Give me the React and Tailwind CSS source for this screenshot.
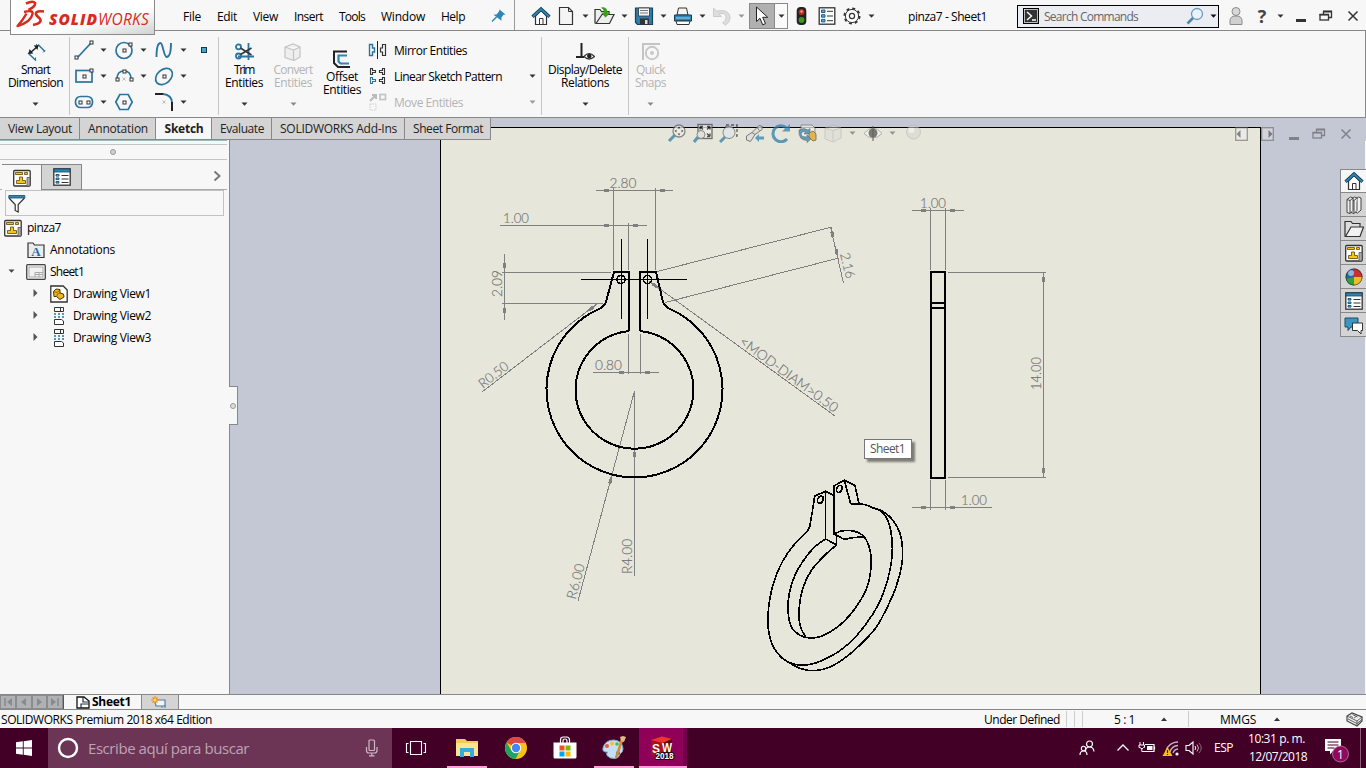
import React, { useLayoutEffect, useRef } from "react";

/* Text run whose tracking is tuned so that it fills a known width. */
function T({ w, c = "", children }) {
  const ref = useRef(null);
  useLayoutEffect(() => {
    const el = ref.current;
    const n = el.textContent.length;
    el.style.letterSpacing = "0px";
    const natural = el.getBoundingClientRect().width;
    el.style.letterSpacing = `${(w - natural) / n}px`;
  }, [w]);
  return (
    <span className={"flex shrink-0 whitespace-nowrap " + c} style={{ width: w }}>
      <span ref={ref} className="inline-block">{children}</span>
    </span>
  );
}

function I({ w = 20, h = 20, c = "", children }) {
  return (
    <svg width={w} height={h} viewBox={`0 0 ${w} ${h}`} fill="none" className={"shrink-0 " + c}>
      {children}
    </svg>
  );
}

const Down = ({ c = "", f = "#333" }) => (
  <I w={7} h={4} c={c}><path d="M.5 .5h6L3.5 3.8z" fill={f} /></I>
);

const B = "#2a759f";
const K = "#333";

/* ---------- shared icons ---------- */
const Home = ({ c }) => (
  <I c={c}>
    <path d="M4.500 10v8.500h11V10L10 4.500z" fill="#fff" stroke={K} strokeWidth="1.200" />
    <path d="M8.500 18.500v-6h3.500v6" stroke={K} />
    <path d="M1.500 10.800L10 3l8.500 7.800" stroke="#123c55" strokeWidth="3.200" />
    <path d="M2 10.500L10 3.200l8 7.300" stroke="#2f86b4" strokeWidth="1.800" />
  </I>
);
const DrawingIcon = ({ c }) => (
  <I w={18} h={18} c={c}>
    <rect x=".7" y="1.500" width="16.500" height="15.500" rx="1" fill="#fff" stroke={K} strokeWidth="1.300" />
    <path d="M2.500 3.500h7v2h-7zM11.500 3.500h3v2h-3zM6.500 8h3v3.500h3v3h-9v-3h3z" fill="#f5c518" stroke="#5d4700" strokeWidth=".8" />
    <path d="M14 8.500h3v8.500h-3z" fill="#aaa" stroke="#555" strokeWidth=".8" />
  </I>
);
const ListIcon = ({ c }) => (
  <I w={18} h={18} c={c}>
    <rect x=".8" y=".8" width="16.400" height="16.400" fill="#fff" stroke={K} strokeWidth="1.300" />
    <path d="M1 1h16v3H1z" fill="#2f86b4" stroke="#16445f" strokeWidth=".8" />
    <path d="M3 6.500h3v1.600H3zM3 10h3v1.600H3zM3 13.500h3v1.600H3z" fill="#5ab0dc" stroke="#155074" strokeWidth=".9" />
    <path d="M8.500 7.500h7M8.500 11h7M8.500 14.500h7" stroke={K} />
  </I>
);
const OptionsList = ({ c }) => (
  <I w={18} h={18} c={c}>
    <rect x="1.200" y=".8" width="15.600" height="16.400" fill="#fff" stroke={K} strokeWidth="1.300" />
    <path d="M3.500 3h3.500v2.500H3.500zM3.500 7.700h3.500v2.500H3.500zM3.500 12.400h3.500v2.500H3.500z" fill="#5ab0dc" stroke="#155074" strokeWidth=".9" />
    <path d="M9 4.300h6M9 9h6M9 13.700h6" stroke={K} />
  </I>
);
const Restore = ({ c, s = "#333" }) => (
  <I w={14} h={14} c={c}>
    <path d="M4.500 5V2.500h8v6H10" stroke={s} strokeWidth="1.300" />
    <path d="M4 2.500h9" stroke={s} strokeWidth="1.800" />
    <rect x="1" y="5.500" width="8.500" height="5.500" stroke={s} strokeWidth="1.300" />
    <path d="M.5 5.700h9.500" stroke={s} strokeWidth="1.600" />
  </I>
);
const Close = ({ c, s = "#333" }) => (
  <I w={12} h={12} c={c}><path d="M1.500 1.500l9 9M10.500 1.500l-9 9" stroke={s} strokeWidth="1.500" /></I>
);
const Min = ({ c, s = "#333" }) => (
  <I w={12} h={12} c={c}><path d="M1 8.500h10" stroke={s} strokeWidth="3" /></I>
);

/* ---------- title bar ---------- */
function TitleBar() {
  return (
    <header className="relative flex h-[31px] shrink-0 items-center border-b border-[#888] bg-[#f7f7f7] pt-[2px] pl-[183px]">
      <div className="absolute top-0 left-[10px] z-20 h-[35px] w-[145px] border-x border-b border-[#8a8a8a] bg-linear-to-br from-white from-60% to-[#d2d2d2]">
        <div className="flex items-start pl-[5px]">
          <I w={30} h={30}>
            <g stroke="#da2a1e" strokeLinejoin="round">
              <path d="M10 3.500Q17 .5 19 3Q20 6 12.500 10" strokeWidth="2.600" />
              <path d="M8 12Q17.500 9.500 16.500 14Q15 22 1.500 26Q7 20 10.500 13.500" strokeWidth="2.400" />
              <path d="M28 11.500Q20 10.500 19.800 13.500Q20 15.500 23.800 18.500Q27 23 17 25" strokeWidth="2.600" />
            </g>
          </I>
          <div className="mt-[9px] ml-[3px] flex text-[15.500px] leading-[20px] text-[#da2a1e] italic">
            <T w={49} c="font-extrabold">SOLID</T><T w={51}>WORKS</T>
          </div>
        </div>
      </div>

      <nav className="flex gap-4 pt-px">
        <T w={18}>File</T><T w={20}>Edit</T><T w={25}>View</T><T w={29}>Insert</T>
        <T w={26}>Tools</T><T w={44}>Window</T><T w={24}>Help</T>
      </nav>
      <I w={16} h={16} c="ml-[26px]">
        <path d="M8.500 1.500l6 5-2 .3-2.200 3 .2 3-8-6 3-.3 2.500-3z" fill="#2f86b4" />
        <path d="M1 13.500l4.500-4.500" stroke="#2f86b4" strokeWidth="1.500" />
      </I>
      <i className="-mt-[2px] ml-[7px] h-[30px] w-px shrink-0 self-start bg-[#999]" />
      <Home c="ml-[16px]" />
      <I w={18} c="ml-[6px]"><path d="M2.500 1.500h9l4 4v13h-13z" fill="#f4f4f4" stroke={K} strokeWidth="1.200" /><path d="M11.500 1.500v4h4" stroke={K} /></I>
      <Down c="ml-[7px]" />
      <I w={24} c="ml-[4px]">
        <path d="M2 17.500V3.500h5l1.500 2H16v3" fill="#eee" stroke={K} strokeWidth="1.200" />
        <path d="M3 17.500L9 8.500h12l-4.500 9z" fill="#eee" stroke={K} strokeWidth="1.200" />
        <path d="M8 1.500q6-1 6.500 5h3l-5 5-4.500-5h3q0-3-3-5z" fill="#3c9a1c" />
      </I>
      <Down c="ml-[4px]" />
      <I c="ml-[6px]">
        <path d="M1.500 2h17v16.500h-15l-2-2z" fill="#2f7da8" stroke="#17435c" strokeWidth="1.200" />
        <path d="M4.500 2h11v8h-11z" fill="#f3f3f3" stroke="#333" strokeWidth=".8" /><path d="M6 4.500h8M6 7h8" stroke="#777" />
        <path d="M6 12.500h9v6H6z" fill="#333" /><path d="M11 14h2.500v4H11z" fill="#ddd" />
      </I>
      <Down c="ml-[6px]" />
      <I c="ml-[6px]">
        <path d="M5.500 2h8l1.500 7h-11z" fill="#f4f4f4" stroke={K} />
        <path d="M1.500 9h17v6h-17z" fill="#2f86b4" stroke="#133d55" /><path d="M3 15h14l-1 3.500H4z" fill="#fff" stroke={K} />
        <path d="M3 12h14" stroke="#9ad0ec" />
      </I>
      <Down c="ml-[6px]" />
      <I c="ml-[6px]"><path d="M1.500 2v8.500h8L7 8q7-2 7 3.500 0 3-3.500 5.500l3 2q5-3 4.500-8.500Q16.500 3 4.500 5z" fill="#ddd" stroke="#c4c4c4" strokeWidth=".8" /></I>
      <Down c="ml-[6px]" f="#999" />
      <div className="ml-[4px] flex h-[26px] w-[39px] shrink-0 items-center border border-[#888] bg-[#fafafa]">
        <div className="flex h-full w-[25px] items-center justify-center border-r border-[#888] bg-[#b0b0b0]">
          <I w={16} h={22}><path d="M2.500 2v14.500l3.500-3.200 2.700 6.500 2.800-1.200-2.800-6.300h5z" fill="#fff" stroke="#222" /></I>
        </div>
        <Down c="ml-[3px]" />
      </div>
      <I w={11} c="mr-[-1px] ml-[8px]"><rect x=".7" y="1" width="9.600" height="18" rx="4" fill="#222" /><circle cx="5.500" cy="6" r="2.900" fill="#c22a1a" /><circle cx="5.500" cy="5.500" r="1.200" fill="#f59a85" /><circle cx="5.500" cy="14" r="2.900" fill="#3a9a20" /></I>
      <OptionsList c="ml-[12px]" />
      <I w={18} h={18} c="ml-[7px]">
        <circle cx="9" cy="9" r="7.600" stroke={K} strokeWidth="1.800" strokeDasharray="3 2.970" />
        <circle cx="9" cy="9" r="6.600" fill="#fff" stroke={K} strokeWidth="1" />
        <circle cx="9" cy="9" r="2.600" stroke={K} strokeWidth="1.200" />
      </I>
      <Down c="ml-[7px]" />
      <T w={79} c="ml-[33px] pt-px">pinza7 - Sheet1</T>
      <div className="ml-[30px] flex h-[23px] w-[202px] shrink-0 items-center border border-black bg-[#ecedf2] pl-[5px]">
        <I w={16} h={16}><rect x=".5" y=".5" width="15" height="15" fill="#333" stroke="#000" /><rect x="1.500" y="1.500" width="13" height="13" stroke="#ddd" strokeWidth=".8" /><path d="M4 4l4.500 4L4 12M9 12h4" stroke="#fff" strokeWidth="1.400" /></I>
        <T w={94} c="ml-[5px] pt-px text-[#666]">Search Commands</T>
        <I w={18} h={18} c="ml-[48px]"><circle cx="11" cy="7" r="5.500" fill="#e8f3fa" stroke="#6c9dbd" strokeWidth="1.300" /><path d="M7 11l-5.500 5.500" stroke="#4d86ae" strokeWidth="2.600" /></I>
        <Down c="ml-[6px]" f="#111" />
      </div>
      <I w={14} c="ml-[10px]"><circle cx="7" cy="5.500" r="4" fill="#d8d8d8" stroke="#8a8a8a" /><path d="M1 18.500v-4q0-4.500 6-4.500t6 4.500v4z" fill="#d0d0d0" stroke="#8a8a8a" /></I>
      <div className="ml-[13px] flex w-3 justify-center text-[18px] font-bold text-[#444]">?</div>
      <Down c="ml-[9px]" />
      <Min c="mt-1 ml-[11px]" />
      <Restore c="ml-[12px]" />
      <Close c="ml-[14px]" />
    </header>
  );
}

/* ---------- ribbon ---------- */
const Sq = ({ x, y }) => <rect x={x - 1.5} y={y - 1.5} width="3" height="3" fill="#fff" stroke={K} />;
const Split = () => <i className="mt-[6px] h-[78px] w-px shrink-0 bg-[#c6c6c6]" />;

function Big({ c, icon, lines, ws, dim, arrow = true, top = "pt-[12px]" }) {
  return (
    <div className={"flex h-full shrink-0 flex-col items-center leading-[13px] " + top + " " + (dim ? "text-[#b4b4b4] " : "") + c}>
      {icon}
      <T w={ws[0]} c="mt-[2px]">{lines[0]}</T>
      <T w={ws[1]}>{lines[1]}</T>
      {arrow && <Down c="mt-[13px]" f={dim ? "#888" : "#333"} />}
    </div>
  );
}

const Cell = ({ children, arrow = true }) => (
  <div className="flex h-[26px] w-[40px] items-center">
    {children}
    {arrow && <Down c="ml-[6px]" />}
  </div>
);

function Ribbon() {
  return (
    <section className="flex h-[87px] shrink-0 border-r border-b border-[#888] bg-[#f7f7f7]">
      <Big c="w-[69px] pl-[2px]" lines={["Smart", "Dimension"]} ws={[29, 55]}
        icon={<I h={18}><path d="M2 10l8 7.500M12 1.500l7 7" stroke={B} strokeWidth="1.500" /><path d="M2 10.500l2-1.500M9.500 17.500v-3M11 1l-1 1M17 9.500l2-2" stroke={B} /><path d="M4 10L12 3" stroke="#222" strokeWidth="1.600" /><path d="M2.500 11l1-5 3.800 4.500zM12.500 2l-1 5L7.800 2.500z" fill="#222" /></I>} />
      <Split />
      <div className="grid h-[78px] w-[148px] grid-cols-[40px_40px_40px_28px] pt-[6px] pl-[4px]">
        <Cell><I><path d="M3 18L17 3" stroke={B} strokeWidth="1.800" /><Sq x={2.500} y={17.500} /><Sq x={17.500} y={2.500} /></I></Cell>
        <Cell><I><circle cx="10" cy="10.500" r="8" stroke={B} strokeWidth="1.700" /><Sq x={10.500} y={10.500} /><Sq x={16.500} y={4.500} /></I></Cell>
        <Cell><I><path d="M2.500 17C2.500 7 4 3 6.500 3s3 13 6 14c3 0 4.500-6 4.500-14" stroke={B} strokeWidth="1.900" /></I></Cell>
        <Cell arrow={false}><I><rect x="7.500" y="7.500" width="5" height="5" fill="#4aa3d0" stroke="#14384d" /></I></Cell>
        <Cell><I><rect x="2" y="4.500" width="16" height="11.500" stroke={B} strokeWidth="1.700" /><Sq x={10.500} y={10.500} /><Sq x={17.500} y={4.500} /></I></Cell>
        <Cell><I><path d="M3 13Q3 5 10 5t7 8" stroke={B} strokeWidth="1.700" /><Sq x={10.500} y={5.500} /><Sq x={3.500} y={13.500} /><Sq x={17.500} y={13.500} /><path d="M8.500 11.500l3 3m0-3l-3 3" stroke="#bbb" /></I></Cell>
        <Cell><I><ellipse cx="10" cy="10.500" rx="9.500" ry="6.800" transform="rotate(-42 10 10.500)" stroke={B} strokeWidth="1.700" /><Sq x={10.500} y={10.500} /></I></Cell>
        <i />
        <Cell><I><rect x="1.500" y="4.500" width="17" height="11" rx="5" stroke={B} strokeWidth="1.700" /><Sq x={6.500} y={10.500} /><Sq x={14.500} y={10.500} /></I></Cell>
        <Cell arrow={false}><I><path d="M1.800 10l4-7.500h8.400l4 7.500-4 7.500H5.800z" stroke={B} strokeWidth="1.700" /><Sq x={10.500} y={10.500} /></I></Cell>
        <Cell><I><path d="M1 2h9" stroke="#222" strokeWidth="2" /><path d="M9 2q9 1 9 9" stroke={B} strokeWidth="1.800" /><path d="M18 10v9" stroke="#222" strokeWidth="2" /><path d="M8.500 8.500l3 3m0-3l-3 3" stroke="#bbb" /></I></Cell>
      </div>
      <Split />
      <Big c="w-[50px]" lines={["Trim", "Entities"]} ws={[20, 38]}
        icon={<I h={18}><path d="M14.500 0v17M4 13.500h16" stroke={B} strokeWidth="1.800" /><circle cx="4.500" cy="3.800" r="2.500" stroke={B} strokeWidth="1.800" /><circle cx="4.500" cy="13" r="2.500" stroke={B} strokeWidth="1.800" /><path d="M6.500 5l11 7M6.500 11.500l11-6.500" stroke="#333" strokeWidth="1.500" /></I>} />
      <Big c="w-[48px]" dim lines={["Convert", "Entities"]} ws={[39, 38]}
        icon={<I h={18}><path d="M2 4l8-3 7 3v10l-6 3.500-9-3zM2 4l8.500 3 6.500-3M10.500 7v10.500" fill="#efefef" stroke="#c6c6c6" strokeWidth="1.300" /></I>} />
      <Big c="w-[50px]" top="pt-[19px]" arrow={false} lines={["Offset", "Entities"]} ws={[32, 38]}
        icon={<I h={18}><path d="M15 1.500H2V13l4 4h12" stroke="#222" strokeWidth="2" /><path d="M15 5.500H6.500v6L8.500 13.500H17" stroke="#2f86b4" strokeWidth="2.200" /></I>} />
      <div className="flex w-[174px] flex-col pt-[6px]">
        <div className="flex h-[26px] items-center"><I c="ml-px"><path d="M1.500 4.500h3V8h2v4h-2v3.500h-3z" stroke={B} strokeWidth="1.400" /><path d="M9.500 1v18" stroke="#222" /><path d="M17.500 4.500h-3V8h-2v4h2v3.500h3z" stroke={K} strokeWidth="1.200" /></I><T w={73} c="ml-[6px] pt-px">Mirror Entities</T></div>
        <div className="flex h-[26px] items-center"><I c="ml-px"><g strokeWidth="1.100"><path d="M2.500 2.500h2v2h3v2h-3v2h-2z" stroke={K} /><path d="M16.500 2.500h-2v2h-3v2h3v2h2z" stroke={K} /><path d="M2.500 11.500h2v2h3v2h-3v2h-2z" stroke={B} /><path d="M16.500 11.500h-2v2h-3v2h3v2h2z" stroke={K} /></g></I><T w={108} c="ml-[6px] pt-px">Linear Sketch Pattern</T><Down c="ml-[27px]" /></div>
        <div className="flex h-[26px] items-center text-[#b4b4b4]"><I c="ml-px"><path d="M2 9l5-5M4 3h4v4" stroke="#bbb" strokeWidth="2" /><rect x="12" y="2.500" width="5.500" height="5" stroke="#c4c4c4" strokeWidth="1.700" /><rect x="2" y="12" width="6" height="6" stroke="#ccc" strokeDasharray="1.500 1" /></I><T w={69} c="ml-[6px] pt-px">Move Entities</T><Down c="ml-[66px]" f="#999" /></div>
      </div>
      <Split />
      <Big c="w-[86px]" lines={["Display/Delete", "Relations"]} ws={[74, 48]}
        icon={<I h={18}><path d="M6.500 0v13M1 14h8" stroke="#222" strokeWidth="2" /><path d="M9 13.500q5-6 10.500 0-5.500 5-10.500 0z" fill="#fff" stroke="#333" strokeWidth="1.200" /><circle cx="14.300" cy="13" r="2.300" fill="#222" /></I>} />
      <Split />
      <Big c="w-[43px]" dim lines={["Quick", "Snaps"]} ws={[29, 31]}
        icon={<I h={18}><path d="M2 17V1h17" stroke="#c4c4c4" strokeWidth="2" /><circle cx="11" cy="10" r="6.200" stroke="#c8c8c8" strokeWidth="2" /><circle cx="11" cy="10" r="2" fill="#c8c8c8" /></I>} />
    </section>
  );
}

function Tabs() {
  const t = "flex h-full items-center justify-center border-r border-[#888] pl-px ";
  return (
    <div className="absolute top-0 left-0 z-10 flex h-[22px] border-b border-[#888] bg-[#d4d4d4] text-[#222]">
      <div className={t + "w-[80px]"}><T w={64}>View Layout</T></div>
      <div className={t + "w-[76px]"}><T w={60}>Annotation</T></div>
      <div className={t + "w-[56px] bg-[#f7f7f7] font-bold"}><T w={39}>Sketch</T></div>
      <div className={t + "w-[60px]"}><T w={44}>Evaluate</T></div>
      <div className={t + "w-[133px]"}><T w={117}>SOLIDWORKS Add-Ins</T></div>
      <div className={t + "w-[86px]"}><T w={70}>Sheet Format</T></div>
    </div>
  );
}

/* ---------- feature tree ---------- */
const ViewIcon = () => (
  <I w={18} h={20}><path d="M4.500 1.500h9v4h-9zM10.500 1.500v4" stroke={K} /><path d="M4 8h2M8 8h2M12 8h2M4 11h2M8 11h2M12 11h2" stroke={B} strokeWidth="1.700" /><path d="M4.500 13.500h7l2 1.500v3.500h-9z" stroke={K} fill="#fff" /></I>
);
const Right = ({ c = "" }) => <I w={5} h={8} c={"-mt-[2px] " + c}><path d="M.5 0L4.500 4 .5 8z" fill="#555" /></I>;

function Tree() {
  const row = "flex h-[22px] items-center ";
  return (
    <aside className="flex w-[230px] shrink-0 flex-col border-r border-[#888] bg-[#f7f7f7] pt-[22px]">
      <div className="mr-[2px] h-px bg-[#9fb9c4]" />
      <div className="mt-[3px] mr-[2px] flex h-[16px] items-center justify-center border-y border-[#c4c4c4] pr-[2px]">
        <i className="size-[6px] rounded-full border border-[#999] bg-[#d0d0d0]" />
      </div>
      <div className="mt-[4px] mr-[2px] flex h-[26px] items-center border-b border-[#aaa]">
        <div className="-mb-px ml-[2px] flex h-[26px] w-[39px] items-center justify-center border-t border-[#888] bg-[#f7f7f7]"><DrawingIcon /></div>
        <div className="-mb-px flex h-[26px] w-[41px] items-center justify-center border border-[#888] bg-[#d4d4d4]"><ListIcon /></div>
        <I w={10} h={12} c="-mt-px ml-[130px]"><path d="M2.500 1.500L7.500 6l-5 4.500" stroke="#777" strokeWidth="1.900" /></I>
      </div>
      <div className="ml-[5px] flex h-[26px] w-[219px] items-center border border-[#c2c2c2] pl-[2px]">
        <I h={20}><path d="M1 5l6.200 6.500v6l3 1.500v-7.500L16.500 5" fill="#fff" stroke={K} strokeWidth="1.200" /><path d="M.8 2.500h16v2.500h-16z" fill="#2f86b4" stroke="#174a66" strokeWidth=".8" /></I>
      </div>
      <div className="pt-px">
        <div className={row + "pl-[4px]"}><DrawingIcon /><T w={34} c="ml-[5px]">pinza7</T></div>
        <div className={row + "pl-[27px]"}><I w={18} h={18}><path d="M1 16.500V2h5l1.500 2h9.500v12.500z" fill="#ececec" stroke={K} strokeWidth="1.200" /><text x="9" y="15" textAnchor="middle" fill="#1f6fa8" fontSize="13" fontWeight="bold" fontFamily="Liberation Serif, serif">A</text></I><T w={65} c="ml-[5px]">Annotations</T></div>
        <div className={row + "pl-[8px]"}><Down c="-mt-[2px]" f="#444" /><I w={20} h={16} c="ml-[11px]"><rect x=".7" y=".7" width="18.600" height="14.600" rx="1" fill="#f2f2f2" stroke="#444" strokeWidth="1.300" /><rect x="3" y="3" width="14" height="10" stroke="#aaa" /><path d="M9 13V8.500h8M9 10.500h8M13 8.500V13" stroke="#aaa" /></I><T w={34} c="ml-[4px]">Sheet1</T></div>
        <div className={row + "pl-[33px]"}><Right /><I w={18} h={18} c="ml-[12px]"><path d="M.8 1h12.400l4 4v12H.8z" fill="#fff" stroke={K} strokeWidth="1.300" /><path d="M3.500 6.500L6 4l4 .5v3.500l3.500 1 .5 3-4 2.500-3.500-3H4z" fill="#f0b61a" stroke="#4d3300" /><path d="M10 8L7 9.500v2M4 6.500l3 1 3-2.500" stroke="#7a5500" strokeWidth=".8" /></I><T w={78} c="ml-[5px]">Drawing View1</T></div>
        <div className={row + "pl-[33px]"}><Right /><div className="ml-[12px]"><ViewIcon /></div><T w={78} c="ml-[5px]">Drawing View2</T></div>
        <div className={row + "pl-[33px]"}><Right /><div className="ml-[12px]"><ViewIcon /></div><T w={78} c="ml-[5px]">Drawing View3</T></div>
      </div>
    </aside>
  );
}

/* ---------- drawing sheet ---------- */
function smooth(p) {
  let d = `M${p[0][0]} ${p[0][1]}`;
  for (let i = 0; i < p.length - 1; i++) {
    const a = p[i - 1] || p[i], b = p[i], c = p[i + 1], e = p[i + 2] || c;
    d += `C${b[0] + (c[0] - a[0]) / 6} ${b[1] + (c[1] - a[1]) / 6} ${c[0] - (e[0] - b[0]) / 6} ${c[1] - (e[1] - b[1]) / 6} ${c[0]} ${c[1]}`;
  }
  return d;
}
const Arw = ({ x, y, r }) => <path d="M0 -.5V.5L-4 1V1.500H-9V-1.500H-4V-1z" fill="#808080" stroke="none" transform={`translate(${x} ${y}) rotate(${r})`} />;
const Dim = ({ x, y, r = 0, w, children }) => (
  <text transform={`translate(${x} ${y}) rotate(${r})`} textLength={w} lengthAdjust="spacingAndGlyphs" fill="#747474" stroke="#747474" strokeWidth=".15" fontSize="13.500" fontFamily="Lato, sans-serif" fontWeight="300">{children}</text>
);

const frontOuter = [[209, 290], [198, 308], [160, 347], [130, 390], [108, 438], [95, 480], [86, 530], [84, 580], [88, 615], [100, 650], [125, 683], [160, 702], [205, 704], [250, 690], [300, 662], [350, 617], [400, 550], [430, 490], [450, 420], [457, 360], [453, 305], [442, 268], [425, 245], [400, 234], [375, 224], [332, 221]];
const backOuter = [[400, 233], [430, 245], [460, 272], [480, 310], [487, 350], [486, 400], [470, 465], [445, 525], [410, 590], [370, 635], [320, 680], [265, 713], [215, 722], [180, 715], [145, 697]];
const frontInner = [[257, 327], [225, 350], [195, 385], [165, 435], [148, 490], [144, 535], [150, 580], [165, 605], [197, 622], [240, 620], [290, 593], [330, 555], [365, 505], [385, 460], [393, 410], [390, 360], [372, 320], [340, 303], [305, 303], [283, 312]];
const backInner = [[290, 345], [255, 375], [215, 420], [190, 470], [178, 530], [180, 585], [197, 622]];

function Sheet() {
  return (
    <svg className="block h-[576px] w-[1136px]" viewBox="230 118 1136 576" fill="none" shapeRendering="crispEdges">
      <rect x="440.500" y="127.500" width="820" height="580" fill="#e6e6da" stroke="#000" />
      <g stroke="#808080">
        <path d="M596 190.500H673M613.500 188V270M655.500 188V270M500 225.500H647M628.500 223V270M504.500 254V320M502 272.500H611M502 303.500H603M593 372.500H659M628.500 334V374M640.500 334V374" />
        <path d="M482 392L598 303M657 271.500L832 227M665 302.500L839 258M830.500 227L843.500 283M649 281L835 416M634.500 391L578 601M634.500 391V576" />
        <path d="M912 210.500H964M930.500 208V270M945.500 208V270M948 272.500H1046M948 477.500H1046M1043.500 272V478M912 507.500H992M930.500 480V510M945.500 480V510" />
        <Arw x={613} y={190.500} r={0} /><Arw x={656} y={190.500} r={180} />
        <Arw x={613} y={225.500} r={0} /><Arw x={629} y={225.500} r={180} />
        <Arw x={504.500} y={272} r={90} /><Arw x={504.500} y={304} r={-90} />
        <Arw x={596} y={305} r={-37} /><Arw x={628} y={372.500} r={0} /><Arw x={641} y={372.500} r={180} />
        <Arw x={831} y={228} r={-103} /><Arw x={838} y={258} r={77} />
        <Arw x={650} y={282} r={-144} /><Arw x={612} y={475} r={-75} /><Arw x={634.500} y={448} r={-90} />
        <Arw x={930} y={210.500} r={0} /><Arw x={946} y={210.500} r={180} />
        <Arw x={1043.500} y={273} r={-90} /><Arw x={1043.500} y={477} r={90} />
        <Arw x={930} y={507.500} r={0} /><Arw x={946} y={507.500} r={180} />
      </g>
      <Dim x={609.500} y={188} w={27}>2.80</Dim>
      <Dim x={503} y={223} w={26}>1.00</Dim>
      <Dim x={501.500} y={297} r={-90} w={27}>2.09</Dim>
      <Dim x={483} y={389} r={-38} w={34}>R0.50</Dim>
      <Dim x={595} y={370} w={27}>0.80</Dim>
      <Dim x={840} y={254} r={76} w={26}>2.16</Dim>
      <Dim x={738.500} y={343.500} r={36} w={118}>&lt;MOD-DIAM&gt;0.50</Dim>
      <Dim x={575.500} y={600} r={-75} w={36}>R6.00</Dim>
      <Dim x={631.500} y={574} r={-90} w={35}>R4.00</Dim>
      <Dim x={920} y={208} w={26}>1.00</Dim>
      <Dim x={1040.500} y={390} r={-90} w={33}>14.00</Dim>
      <Dim x={961} y={505} w={26}>1.00</Dim>

      <g stroke="#000">
        <path d="M581 279.500H687M621.500 239V319M647.500 239V319" />
        <g strokeWidth="2">
          <path d="M629 331V272H614L606 302Q604.500 306 600 308.500A88 88 0 1 0 669 308.500Q664.500 306 663 302L656 272H640V331" />
          <path d="M629 331A59 59 0 1 0 640 331" />
          <circle cx="621" cy="279.500" r="4" strokeWidth="1.600" /><circle cx="647.500" cy="279.500" r="4" strokeWidth="1.600" />
          <path d="M931 272H945V478H931zM931 303H945M931 308H945" />
        </g>
        <g transform="translate(740 430) scale(.33333)" strokeWidth="5">
          <path d={smooth(frontOuter)} /><path d={smooth(backOuter)} />
          <path d={smooth(frontInner)} /><path d={smooth(backInner)} />
          <path d="M209 290L217 245L224 198L257 184L283 197M257 184V327L290 345V315L283 312V167L313 151L345 167L357 221M313 151L332 221M283 312L312 328L340 323L372 320" />
          <ellipse cx="241" cy="209" rx="8" ry="11" transform="rotate(25 241 209)" />
          <ellipse cx="298" cy="177" rx="8" ry="11" transform="rotate(25 298 177)" />
        </g>
      </g>
    </svg>
  );
}

function ViewTools() {
  return (
    <div className="absolute top-[4px] left-[667px] z-10 flex h-[22px] items-center opacity-75">
      <I><path d="M8 12l-6 6" stroke="#2f7da8" strokeWidth="3" /><circle cx="12" cy="8" r="6" fill="#eee" stroke="#666" strokeWidth="1.300" /><path d="M12 3.500l1.500 2h-3zM12 12.500l1.500-2h-3zM7.500 8l2-1.500v3zM16.500 8l-2-1.500v3z" fill="#222" /></I>
      <I c="ml-[6px]"><rect x="5" y="1.500" width="14" height="14" fill="#eee" stroke="#444" strokeWidth="1.300" /><path d="M7 3.500l3 3M17 3.500l-3 3M17 13.500l-3-3M7 3.500h3M7 3.500v3M17 3.500h-3M17 3.500v3M17 13.500v-3M17 13.500h-3" stroke="#222" strokeWidth="1.400" /><path d="M5 14l-4 5" stroke="#2f7da8" strokeWidth="3" /><circle cx="8" cy="11.500" r="4" fill="#ddd" stroke="#666" /></I>
      <I c="ml-[6px]"><rect x="7" y="2" width="11" height="11" stroke="#333" strokeWidth="1.300" strokeDasharray="3 2" /><path d="M7 13l-6 6" stroke="#2f7da8" strokeWidth="3" /><circle cx="10" cy="9.500" r="6" fill="#dde6e8" stroke="#666" /></I>
      <I c="ml-[6px]"><path d="M1.500 13L7 9.500 14 2.500l3.500 1-.5 3L10 11.500l-4.500 7-4-1.500z" fill="#ddd" stroke="#555" /><path d="M7 9.500l3 2M12 4.500l2.500 3" stroke="#555" /><path d="M10 15l4-4v2.500h5v3h-5V19z" fill="#2f86b4" /></I>
      <I c="ml-[6px]"><path d="M15.500 5A8 8 0 1 0 16 16" stroke="#2f7da8" strokeWidth="3" /><path d="M19 1v7.500h-8z" fill="#2f86b4" /></I>
      <I c="ml-[6px]"><path d="M4 2h11l3 3v10H4z" fill="#eee" stroke="#777" /><path d="M2 7q5-3 9 0l2-1.500V11H7l2-2q-3-1-5 1-1 4 6 4v-2l4.500 3.500L10 19.500v-2Q1 17 2 7z" fill="#2f86b4" stroke="#444" strokeWidth=".6" /><path d="M12 10l4-2 3 3v6l-3 1-4-4z" fill="#e0a32a" stroke="#5a3b00" strokeWidth=".8" /></I>
      <I c="ml-[6px] opacity-60"><path d="M2 5l9-3 7 3v10l-8 4-8-3zM2 5l8 2.500L18 5M10 7.500V19" fill="#dcdcd4" stroke="#aaa" /></I>
      <Down c="ml-[6px]" f="#777" />
      <I c="ml-[7px]"><path d="M1 10.500q9-11 18 0-9 9-18 0z" fill="#f4f4f4" stroke="#999" /><circle cx="10" cy="10" r="4.500" fill="#555" /><path d="M10 3v15" stroke="#333" /></I>
      <Down c="ml-[6px]" f="#777" />
      <I c="ml-[7px] opacity-70"><circle cx="10.500" cy="9" r="7" fill="#d6d6d0" stroke="#b4b4b0" /><circle cx="8.500" cy="7" r="3" fill="#f8f8f8" /></I>
    </div>
  );
}

function TaskPane() {
  const c = "flex h-[24px] items-center justify-center border-b border-[#888] bg-[#d4d4d4]";
  return (
    <div className="absolute top-[51px] right-0 z-10 w-[26px] border-t border-l border-[#888]">
      <div className="flex h-[23px] items-center justify-center border-b border-[#888] bg-[#f7f7f7]"><Home /></div>
      <div className={c}><I><g fill="#f0f0f0" stroke={K} strokeWidth=".9"><path d="M11 4.500l3.500-2.500 2.500 1v12l-3.500 3-2.500-1z" /><path d="M7 4.500l3.500-2.500 2.500 1v12.500l-3 3-3-1z" /><path d="M3 4.500l3.500-2.500 2.500 1v12.500l-3 3-3-1z" /><path d="M3 4.500l3 1 3-2.500M6 5.500v13M10 18.500V5.500l3-2.500M9 5l1 .5" /></g></I></div>
      <div className={c}><I><path d="M1 17.500V2.500h6l1.500 2H16v4" fill="#ddd" stroke={K} strokeWidth="1.200" /><path d="M1.500 17.500L7 8h12.500L16 17.500z" fill="#f2f2f2" stroke={K} strokeWidth="1.200" /></I></div>
      <div className={c}><DrawingIcon /></div>
      <div className={c}><I><circle cx="10" cy="10" r="8.500" fill="#2a62b0" /><path d="M10 10L10 1.500A8.500 8.500 0 0 1 18.500 10z" fill="#c9322a" /><path d="M10 10H18.500A8.500 8.500 0 0 1 10 18.500z" fill="#e9bd2c" /><path d="M10 10V18.500A8.500 8.500 0 0 1 2 12z" fill="#35a03a" /><circle cx="7" cy="6" r="3" fill="#b9dcf5" opacity=".7" /><circle cx="10" cy="10" r="8" stroke="#222" strokeOpacity=".5" /></I></div>
      <div className={c}><ListIcon /></div>
      <div className={c}><I><path d="M1 3h13v9H7l-3 3.500V12H1z" fill="#3d95c4" stroke="#1a4c68" /><path d="M8.500 8h10v7.500h-1.500V19l-3.500-3.500h-5z" fill="#fff" stroke={K} /></I></div>
    </div>
  );
}

/* ---------- bottom bars ---------- */
function SheetTabs() {
  const n = "flex h-full w-4 items-center justify-center border border-[#8c8c8c] bg-[#b0b1b5]";
  return (
    <div className="flex h-[16px] shrink-0 border-y border-[#888] bg-[#f7f7f7]">
      <div className="flex w-[64px] border-r border-[#555] bg-[#b0b1b5]">
        <div className={n}><I w={10} h={10}><path d="M2 1v8" stroke="#8a8a8a" strokeWidth="1.500" /><path d="M9 1v8L4 5z" fill="#8a8a8a" /></I></div>
        <div className={n}><I w={10} h={10}><path d="M7 1v8L2 5z" fill="#8a8a8a" /></I></div>
        <div className={n}><I w={10} h={10}><path d="M3 1v8l5-4z" fill="#8a8a8a" /></I></div>
        <div className={n}><I w={10} h={10}><path d="M8 1v8" stroke="#8a8a8a" strokeWidth="1.500" /><path d="M1 1v8l5-4z" fill="#8a8a8a" /></I></div>
      </div>
      <div className="flex w-[78px] items-center border-r border-[#888] pl-[12px] font-bold">
        <I w={14} h={13}><path d="M1 1h7l5 4v7H1z" fill="#fff" stroke="#111" strokeWidth="1.300" /><path d="M7 1v5h6M5 12V8h8" stroke="#234" strokeWidth="1.200" /></I>
        <T w={39} c="-mt-px ml-[2px]">Sheet1</T>
      </div>
      <div className="flex w-[37px] items-center justify-center border-r border-[#888] bg-[#d4d4d4] pr-[2px]">
        <I w={16} h={13}><path d="M4 4h10v6H5z" fill="#eef4f8" stroke="#567f9e" strokeWidth="1.200" /><path d="M11 10v2M14 9v3" stroke="#567f9e" /><path d="M4 0v8M0 4h8M1.500 1.500l5 5M6.500 1.500l-5 5" stroke="#f08a1c" strokeWidth="1.100" /><circle cx="4" cy="4" r="1.500" fill="#ffe04d" /></I>
      </div>
    </div>
  );
}

const Up = ({ c }) => <I w={6} h={4} c={c}><path d="M0 4h6L3 .5z" fill="#333" /></I>;
function StatusBar() {
  const v = "h-4 w-px shrink-0 bg-[#ccc] ";
  return (
    <div className="flex h-[18px] shrink-0 items-center bg-[#f7f7f7] pl-px">
      <T w={211} c="pt-px">SOLIDWORKS Premium 2018 x64 Edition</T>
      <T w={76} c="ml-[772px] pt-px">Under Defined</T>
      <i className={v + "ml-[6px]"} /><i className={v + "ml-[7px]"} /><i className={v + "ml-[7px]"} />
      <T w={21} c="ml-[31px] pt-px">5 : 1</T><Up c="ml-[26px]" />
      <i className={v + "ml-[21px]"} />
      <T w={36} c="ml-[31px] pt-px">MMGS</T><Up c="ml-[18px]" />
      <I w={17} h={15} c="ml-[66px]"><path d="M1 4l5-3 10 4v4l-5 5-10-5z" fill="#eee" stroke="#444" strokeWidth="1.200" /><path d="M1 4l10 5L16 5M11 9v5M2 7l9 4.500 5-4M4 4l3 1.500M6.500 2.500l5 2.500M8 6l3-2" stroke="#555" strokeWidth=".9" /></I>
    </div>
  );
}

function TaskBar() {
  return (
    <footer className="flex h-[40px] shrink-0 items-center bg-[#420027] text-white">
      <div className="flex w-[48px] justify-center">
        <I w={16} h={16}><path d="M0 2.300L6.800 1.300V7.500H0zM7.700 1.200L16 0v7.500H7.700zM0 8.500h6.800v6.200L0 13.700zM7.700 8.500H16V16l-8.300-1.200z" fill="#fff" /></I>
      </div>
      <div className="flex h-full w-[344px] items-center bg-[#6c3556] pl-[9px] text-[15px] text-[#bea3b3]">
        <I w={22} h={22}><circle cx="11" cy="11" r="9" stroke="#fff" strokeWidth="2.400" /></I>
        <T w={161} c="ml-[9px]">Escribe aquí para buscar</T>
        <I w={14} h={18} c="ml-[116px]"><rect x="4" y="1" width="5.500" height="10.500" rx="1" stroke="#cdb9c5" strokeWidth="1.200" /><path d="M1.500 8v3.500q0 2.500 2.500 2.500h5.500q2.500 0 2.500-2.500V8M6.800 14v3M4 16.800h5.500" stroke="#cdb9c5" strokeWidth="1.200" /></I>
      </div>
      <I w={22} h={18} c="ml-[13px]"><path d="M5.500 2.500h11v13h-11zM3.500 4.500h-2v9h2M18.500 4.500h2v9h-2" stroke="#fff" strokeWidth="1.100" /></I>
      <div className="ml-[16px] flex h-full w-[48px] shrink-0 flex-col items-center">
        <I w={24} h={24} c="mt-[8px]"><path d="M1 3h9l2 2h11v15H1z" fill="#f5ca50" /><path d="M1 7h22v13H1z" fill="#fce491" /><path d="M5 12h14v9h-4v-5H9v5H5z" fill="#3aa9e0" /></I>
        <i className="mt-[6px] h-[2px] w-[40px] bg-[#ff9fd7]" />
      </div>
      <div className="flex w-[49px] shrink-0 justify-center">
        <I w={24} h={24}><circle cx="12" cy="12" r="11" fill="#fbc116" /><path d="M12 12L2.500 6.500A11 11 0 0 1 21.500 6.500L21.500 7H12z" fill="#dd4b3e" /><path d="M2.500 6.500A11 11 0 0 0 11.500 23l4.500-8.500L12 17l-5-3z" fill="#1da362" /><circle cx="12" cy="12" r="5.200" fill="#fff" /><circle cx="12" cy="12" r="4.200" fill="#4386f5" /></I>
      </div>
      <div className="flex w-[49px] shrink-0 justify-center">
        <I w={24} h={24}><path d="M.5 6.500h23V21q0 1.500-1.500 1.500H2Q.5 22.500.5 21z" fill="#fff" /><path d="M7.500 7V4q0-3 3-3h3q3 0 3 3v3M10 7V5q0-2 2-2t2 2v2" stroke="#fff" strokeWidth="1.200" /><path d="M6.500 9.500h5v5h-5z" fill="#f25022" /><path d="M12.500 9.500h5v5h-5z" fill="#7fba00" /><path d="M6.500 15.500h5v5h-5z" fill="#00a4ef" /><path d="M12.500 15.500h5v5h-5z" fill="#ffb900" /></I>
      </div>
      <div className="flex h-full w-[50px] shrink-0 flex-col items-center">
        <I w={26} h={26} c="mt-[7px]"><path d="M2 13Q4 5 13 5q9 1 9 9 0 3-3 5-1 4-5 4.500-5 .5-8-3-1-2 .5-3.500Q1 17.500 2 13z" fill="#c4e0f2" stroke="#7fa9c9" /><circle cx="6" cy="11" r="2" fill="#e35a3c" /><circle cx="11" cy="8.500" r="2" fill="#f2c22f" /><circle cx="16" cy="9" r="1.800" fill="#55b849" /><circle cx="17" cy="18" r="2" fill="#3c6fc4" /><path d="M15 23l6-18" stroke="#d38a3a" strokeWidth="2.600" /><path d="M20 6l-1-4 3-1 3 1-2 5z" fill="#e0b88a" /></I>
        <i className="mt-[5px] h-[2px] w-[40px] bg-[#ff9fd7]" />
      </div>
      <div className="flex h-full w-[48px] shrink-0 flex-col items-center border-r-4 border-[#70004a] bg-[#8f0058]">
        <I w={26} h={26} c="mt-[7px] ml-[2px]"><path d="M2 5l11-3.500L23 4v14l-9 6-12-4z" fill="#a71318" /><path d="M2 5l11-3.500L23 4l-9 4z" fill="#f0342e" /><path d="M14 8v16l9-6V4z" fill="#5d0b0e" />
          <text x="3" y="17.500" fontSize="13" fontWeight="bold" fill="#fff" fontFamily="Liberation Sans, sans-serif" textLength="8" lengthAdjust="spacingAndGlyphs">S</text><text x="13" y="17" fontSize="12" fontWeight="bold" fill="#fff" fontFamily="Liberation Sans, sans-serif" textLength="10" lengthAdjust="spacingAndGlyphs">W</text>
          <text x="6.500" y="24" fontSize="9" fontWeight="bold" fill="#fff" stroke="#111" strokeWidth="2" paintOrder="stroke" fontFamily="Liberation Sans, sans-serif" textLength="18" lengthAdjust="spacingAndGlyphs">2018</text></I>
        <i className="mt-[5px] -mr-[4px] h-[2px] w-[48px] shrink-0 bg-[#ff9fd7]" />
      </div>
      <I w={16} h={16} c="ml-[392px]"><circle cx="10.500" cy="4" r="3" stroke="#fff" strokeWidth="1.200" /><path d="M6.500 11q0-4 4-4t4.500 4.500" stroke="#fff" strokeWidth="1.200" /><circle cx="4.500" cy="8.500" r="2.200" stroke="#fff" strokeWidth="1.100" /><path d="M1 15q0-4 3.500-4T8 15" stroke="#fff" strokeWidth="1.200" /></I>
      <I w={14} h={10} c="ml-[21px]"><path d="M1.500 7.500L7 2l5.500 5.500" stroke="#fff" strokeWidth="1.300" /></I>
      <I w={18} h={16} c="ml-[8px]"><path d="M7 4.500h9v7H5M16.500 6.500v3" stroke="#fff" strokeWidth="1.200" /><path d="M9 6h5.500v4H9z" fill="#fff" /><path d="M2 2v3M5.500 2v3M1 5h5.500v2.500H5.500L4 9 2 7.500H1zM3.800 8v3.500H6" stroke="#fff" /></I>
      <I w={18} h={18} c="ml-[6px]"><path d="M4 12A12 12 0 0 1 16 3M8 13a9 9 0 0 1 8-6.500M11 14a6 6 0 0 1 5-4" stroke="#c8b2c0" strokeWidth="1.300" /><circle cx="15" cy="15" r="1.600" fill="#fff" /><path d="M5.500 8l5 9H.5z" fill="#fcc012" /><path d="M5.500 11v3M5.500 15v1" stroke="#222" strokeWidth="1.200" /></I>
      <I w={18} h={16} c="ml-[5px]"><path d="M1 5.500h3l4-3.500v12l-4-3.500H1z" stroke="#fff" strokeWidth="1.100" /><path d="M10 6q1.500 2 0 4" stroke="#fff" /><path d="M12 4.500q3 3.500 0 7" stroke="#cbb5c3" /><path d="M14 3q4.500 5 0 10" stroke="#8f6a80" /></I>
      <T w={19} c="ml-[11px]">ESP</T>
      <div className="ml-[15px] flex flex-col leading-[18px]">
        <T w={57}>10:31 p. m.</T>
        <T w={58} c="ml-px">12/07/2018</T>
      </div>
      <div className="ml-[17px]">
        <I w={28} h={28} c="mt-[5px]"><path d="M1 2h16v12H9l-3 3.500V14H1z" fill="#fff" /><path d="M3.500 5h11M3.500 8h11M3.500 11h7" stroke="#420027" strokeWidth="1.200" /><circle cx="16.500" cy="17" r="8" fill="#8f0a5c" stroke="#c77aa9" strokeWidth=".8" /><text x="16.500" y="21.500" textAnchor="middle" fontSize="12" fill="#fff" fontFamily="Open Sans, sans-serif">1</text></I>
      </div>
      <i className="ml-[8px] h-full w-px bg-[#8a6078]" />
    </footer>
  );
}

export default function App() {
  return (
    <div className="flex h-[768px] w-[1366px] flex-col overflow-hidden bg-[#f7f7f7] font-['Open_Sans','Noto_Sans',sans-serif] text-[12px] leading-[16px] text-black">
      <TitleBar />
      <Ribbon />
      <main className="relative flex h-[576px] shrink-0 bg-[#c4c8d4]">
        <Tabs />
        <Tree />
        <Sheet />
        <div className="absolute top-[268px] left-[229px] z-10 flex h-[39px] w-[9px] items-center justify-center border-y border-r border-[#888] bg-[#f7f7f7]">
          <i className="size-[6px] shrink-0 rounded-full border border-[#999] bg-[#ddd]" />
        </div>
        <ViewTools />
        <div className="absolute top-[8px] right-[14px] z-10 flex items-center opacity-60">
          <I w={13} h={14}><rect x=".7" y=".7" width="11.600" height="12.600" fill="#eee" stroke="#666" strokeWidth="1.300" /><path d="M5.500 3v8L1.500 7z" fill="#444" /></I>
          <I w={13} h={14} c="ml-[13px]"><rect x=".7" y=".7" width="11.600" height="12.600" fill="#ddd" stroke="#666" strokeWidth="1.300" /><path d="M7.500 3v8L11.500 7z" fill="#444" /></I>
          <Min c="mt-1 ml-[14px]" s="#555" />
          <Restore c="ml-[12px]" s="#555" />
          <Close c="ml-[14px]" s="#555" />
        </div>
        <i className="absolute top-[23px] right-0 h-[553px] w-px bg-[#f7f7f7]" />
        <TaskPane />
        <div className="absolute top-[321px] left-[864px] z-10 flex h-[20px] w-[48px] items-center border border-[#767676] bg-white pl-[5px] text-[#575757] shadow-[3px_3px_2px_rgba(0,0,0,0.45)]">
          <T w={35}>Sheet1</T>
        </div>
      </main>
      <SheetTabs />
      <StatusBar />
      <TaskBar />
    </div>
  );
}
